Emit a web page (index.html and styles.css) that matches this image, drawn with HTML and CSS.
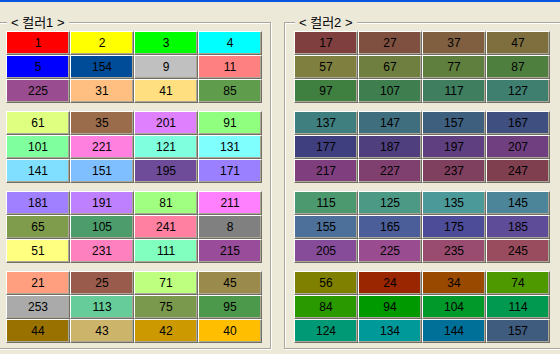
FILE: index.html
```html
<!DOCTYPE html>
<html>
<head>
  <title>컬러 선택</title>
  <link rel="stylesheet" href="styles.css">
</head>
<body>
  <div class="title-edge"></div>

  <div class="panels">
    <fieldset class="color-box left-box">
      <legend>&lt; 컬러1 &gt;</legend>
      <div class="groups" id="colors1"></div>
    </fieldset>
    <fieldset class="color-box right-box">
      <legend>&lt; 컬러2 &gt;</legend>
      <div class="groups" id="colors2"></div>
    </fieldset>
  </div>

  <script>
    var colors1 = [
      [[1, '#ff0000'], [2, '#ffff00'], [3, '#00ff00'], [4, '#00ffff'],
       [5, '#0000ff'], [154, '#004c99'], [9, '#c0c0c0'], [11, '#ff8080'],
       [225, '#994c8f'], [31, '#ffbf80'], [41, '#ffdf80'], [85, '#5f9c4c']],
      [[61, '#dfff80'], [35, '#9a6c4c'], [201, '#df80ff'], [91, '#90ff80'],
       [101, '#80ff9f'], [221, '#ff80df'], [121, '#80ffdf'], [131, '#80ffff'],
       [141, '#80dfff'], [151, '#80bfff'], [195, '#6e4c9a'], [171, '#9a80ff']],
      [[181, '#a080ff'], [191, '#bf80ff'], [81, '#a0ff80'], [211, '#ff80ff'],
       [65, '#7f9c4c'], [105, '#4c9c6c'], [241, '#ff80a0'], [8, '#808080'],
       [51, '#ffff80'], [231, '#ff80bf'], [111, '#80ffbf'], [215, '#994c99']],
      [[21, '#ff9f80'], [25, '#995c4c'], [71, '#bfff80'], [45, '#9a8a4c'],
       [253, '#aaaaaa'], [113, '#66cc99'], [75, '#7a994c'], [95, '#4c994c'],
       [44, '#997100'], [43, '#ccb46b'], [42, '#cc9900'], [40, '#ffbf00']]
    ];

    var colors2 = [
      [[17, '#7f3f3f'], [27, '#7f4f3f'], [37, '#7f5f3f'], [47, '#7f6f3f'],
       [57, '#7f7f3f'], [67, '#6f7f3f'], [77, '#5f7f3f'], [87, '#4f7f3f'],
       [97, '#3f7f3f'], [107, '#3f7f4f'], [117, '#3f7f5f'], [127, '#3f7f6f']],
      [[137, '#3f7f7f'], [147, '#3f6f7f'], [157, '#3f5f7f'], [167, '#3f4f7f'],
       [177, '#3f3f7f'], [187, '#4f3f7f'], [197, '#5f3f7f'], [207, '#6f3f7f'],
       [217, '#7f3f7f'], [227, '#7f3f6f'], [237, '#7f3f5f'], [247, '#7f3f4f']],
      [[115, '#4c9970'], [125, '#4c9985'], [135, '#4c9999'], [145, '#4c8599'],
       [155, '#4c7099'], [165, '#4c5e99'], [175, '#4c4c99'], [185, '#5e4c99'],
       [205, '#874c99'], [225, '#994c8f'], [235, '#994c70'], [245, '#994c5e']],
      [[56, '#7f7f00'], [24, '#992600'], [34, '#994a00'], [74, '#4f9900'],
       [84, '#2a9900'], [94, '#009900'], [104, '#00992a'], [114, '#00994f'],
       [124, '#009975'], [134, '#009999'], [144, '#007099'], [157, '#3f5c7f']]
    ];

    function buildGroups(id, groups) {
      var box = document.getElementById(id);
      groups.forEach(function(group) {
        var grid = document.createElement('div');
        grid.className = 'group';
        group.forEach(function(item) {
          var swatch = document.createElement('div');
          swatch.className = 'swatch';
          swatch.textContent = item[0];
          swatch.style.backgroundColor = item[1];
          grid.appendChild(swatch);
        });
        box.appendChild(grid);
      });
    }

    buildGroups('colors1', colors1);
    buildGroups('colors2', colors2);
  </script>
</body>
</html>
```

FILE: styles.css
```css
body {
  margin: 0;
  padding: 0;
  height: 354px;
  overflow: hidden;
  background-color: #ece9d8;
  font-family: "Liberation Sans", "Noto Sans CJK KR", sans-serif;
  font-size: 12px;
  color: #000;
}

.title-edge {
  height: 2px;
  background-color: #0a55e0;
}

.panels {
  display: flex;
  gap: 13px;
  margin-top: 13px;
  margin-left: -4px;
}

.color-box {
  flex: none;
  margin: 0;
  padding: 1px 8px 5px 9px;
  min-width: 0;
  border: 1px solid #aca899;
  box-shadow: inset 1px 1px 0 #fff, 1px 1px 0 #fff;
}

.right-box {
  padding-right: 20px;
}

.color-box legend {
  margin-left: 1px;
  padding: 0 4px;
  height: 15px;
  line-height: 15px;
  font-size: 13px;
  background-color: #ece9d8;
}

.groups {
  display: flex;
  flex-direction: column;
  gap: 8px;
}

.group {
  display: grid;
  grid-template-columns: repeat(4, 64px);
  grid-auto-rows: 24px;
}

.swatch {
  box-sizing: border-box;
  border: 1px solid;
  border-color: #fff #716f64 #716f64 #fff;
  box-shadow: inset -1px -1px 0 #aca899;
  text-align: center;
  line-height: 22px;
  font-size: 12px;
}
```
